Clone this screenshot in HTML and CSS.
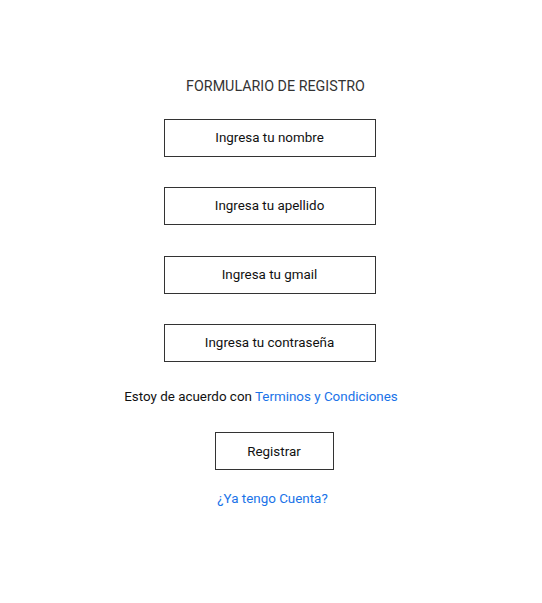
FILE: index.html
```html
<!DOCTYPE html>
<html lang="es">
<head>
<meta charset="utf-8">
<link rel="stylesheet" href="styles.css">
</head>
<body>
<main class="form">
  <h1 class="title">FORMULARIO DE REGISTRO</h1>
  <div class="field">Ingresa tu nombre</div>
  <div class="field field-wide-gap">Ingresa tu apellido</div>
  <div class="field">Ingresa tu gmail</div>
  <div class="field field-last">Ingresa tu contraseña</div>
  <p class="terms">Estoy de acuerdo con <a class="link" href="#">Terminos y Condiciones</a></p>
  <div class="button">Registrar</div>
  <a class="link account" href="#">¿Ya tengo Cuenta?</a>
</main>
</body>
</html>
```
FILE: styles.css
```css
html, body {
  margin: 0;
  padding: 0;
  background: #fff;
}
body {
  font-family: Roboto, "Liberation Sans", sans-serif;
  font-size: 13.4px;
  color: #111;
}
.form {
  display: flex;
  flex-direction: column;
  align-items: center;
  padding-top: 78px;
}
.title {
  margin: 0 0 24px 9px;
  font-size: 14.3px;
  font-weight: 400;
  line-height: 17px;
  color: #333;
}
.field {
  box-sizing: border-box;
  width: 212px;
  height: 38px;
  border: 1px solid #333;
  display: flex;
  align-items: center;
  justify-content: center;
  margin: 0 3px 30px 0;
  padding-bottom: 2px;
}
.field-wide-gap {
  margin-bottom: 31px;
}
.field-last {
  margin-bottom: 27px;
}
.terms {
  margin: 0 20px 27px 0;
  line-height: 16px;
}
.link {
  color: #1a73e8;
  text-decoration: none;
}
.button {
  box-sizing: border-box;
  width: 119px;
  height: 38px;
  border: 1px solid #333;
  display: flex;
  align-items: center;
  justify-content: center;
  margin: 0 0 21px 6px;
}
.account {
  margin-left: 3px;
  line-height: 16px;
}
```
